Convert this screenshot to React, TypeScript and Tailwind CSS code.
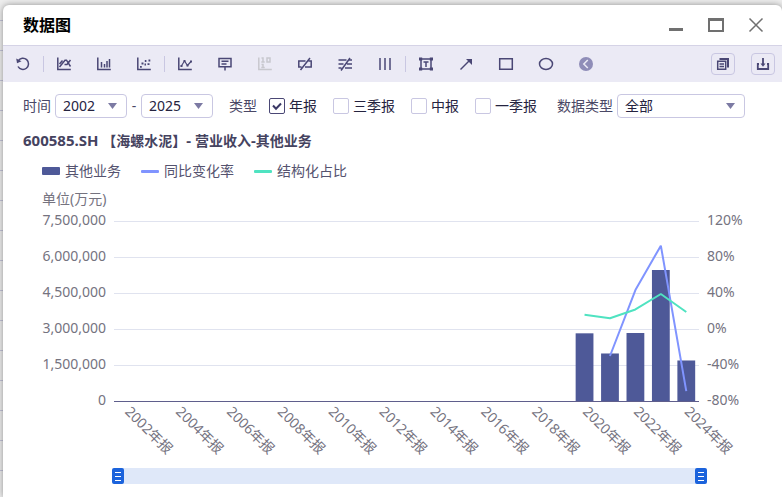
import React, { useState } from 'react';

const YEARS = Array.from({ length: 24 }, (_, i) => 2002 + i);
const REPORTS = ['年报', '三季报', '中报', '一季报'];

interface Point {
  year: number;
  income: number;
  yoy?: number;
  share: number;
}

const data: Point[] = [
  { year: 2020, income: 2820000, share: 15.9 },
  { year: 2021, income: 1980000, yoy: -30, share: 11.9 },
  { year: 2022, income: 2833000, yoy: 43.3, share: 21.7 },
  { year: 2023, income: 5458000, yoy: 92.6, share: 38.9 },
  { year: 2024, income: 1688000, yoy: -69, share: 18.9 },
];

// Plot area inside the chart svg
const LEFT = 111;
const RIGHT = 696;
const TOP = 33;
const BOTTOM = 213;
const BAND = (RIGHT - LEFT) / 23;

const xOf = (year: number) => LEFT + BAND * (year - 2002 + 0.5);
const yOfIncome = (v: number) => BOTTOM - (v / 7500000) * (BOTTOM - TOP);
const yOfPercent = (v: number) => BOTTOM - ((v + 80) / 200) * (BOTTOM - TOP);

function Icon({ children }: { children: React.ReactNode }) {
  return (
    <svg
      width="16"
      height="16"
      viewBox="0 0 16 16"
      fill="none"
      stroke="currentColor"
      strokeWidth="1.5"
      aria-hidden="true"
    >
      {children}
    </svg>
  );
}

const Axes = () => <path d="M1.8 1.5v12h13" />;

const tools = [
  {
    name: '重置',
    icon: (
      <Icon>
        <path d="M3.2 4.8A5.6 5.6 0 1 1 3 10.5" />
        <path d="M1.2 2.5l.8 4.7 4.5-2z" fill="currentColor" stroke="none" />
      </Icon>
    ),
    divider: true,
  },
  {
    name: '折线图',
    icon: (
      <Icon>
        <Axes />
        <path d="M3.5 11L9 4.2h1.5L14.5 10.5M3.5 8L6.5 4.500M8.500 8.500h2.500L14.5 4" />
      </Icon>
    ),
  },
  {
    name: '柱状图',
    icon: (
      <Icon>
        <Axes />
        <path d="M5.5 6v5.5M8.5 8v3.5M11 5v6.5M13.5 3v8.5" />
      </Icon>
    ),
  },
  {
    name: '散点图',
    icon: (
      <Icon>
        <Axes />
        <path d="M4 10.8h1.8M5.5 7.5h2M8.5 8.5h1.5M8.8 5h1.6M12.5 4.5h1.8M11.5 8.2h2" strokeWidth="1.8" />
      </Icon>
    ),
    divider: true,
  },
  {
    name: '极值',
    icon: (
      <Icon>
        <Axes />
        <path d="M4 10.5l3.5-5.5 3 4.5L14 5.5" strokeWidth="1.2" />
        <path d="M6.5 5h2M9.5 9.5h2M13 5.5h2M3.5 10h2" strokeWidth="2" />
      </Icon>
    ),
  },
  {
    name: '标注',
    icon: (
      <Icon>
        <path d="M2 2.5h12v8.3H2zM4.5 5.3h7M4.5 8h5M8 11v3.5" />
      </Icon>
    ),
  },
  {
    name: '小数位',
    icon: (
      <Icon>
        <Axes />
        <path d="M4.5 2H6v4.5M4.3 6h3.4M10 2h3v4h-3zM4.5 8.5H6v3.5M4.3 11.5h3.4" />
      </Icon>
    ),
    disabled: true,
  },
  {
    name: '隐藏边框',
    icon: (
      <Icon>
        <path d="M8.5 5H1.8v6h2.7M11.5 5h2.7v6H8M3.5 14L13 2" />
      </Icon>
    ),
  },
  {
    name: '隐藏网格线',
    icon: (
      <Icon>
        <path d="M1.5 4h8M12 4h3M1.5 8h5M10 8h5M1.5 12h3M8 12h7M4 14.5L13 2" />
      </Icon>
    ),
  },
  {
    name: '竖线',
    icon: (
      <Icon>
        <path d="M3 2v12M8 2v12M13 2v12" strokeWidth="2" opacity=".75" />
      </Icon>
    ),
    divider: true,
  },
  {
    name: '文本框',
    icon: (
      <Icon>
        <path d="M3 3h10v10H3zM5.5 6h5M8 6v5" />
        <path d="M1 1.5h3.2v3H1zM11.8 1.5H15v3h-3.2zM1 11.5h3.2v3H1zM11.8 11.5H15v3h-3.2z" fill="currentColor" stroke="none" />
      </Icon>
    ),
  },
  {
    name: '箭头',
    icon: (
      <Icon>
        <path d="M2.5 13.5L11 5" />
        <path d="M8 3h6v6z" fill="currentColor" stroke="none" />
      </Icon>
    ),
  },
  {
    name: '矩形',
    icon: (
      <Icon>
        <path d="M1.7 2.7h12.6v10.6H1.7z" />
      </Icon>
    ),
  },
  {
    name: '椭圆',
    icon: (
      <Icon>
        <ellipse cx="8" cy="8" rx="6.5" ry="5.5" />
      </Icon>
    ),
  },
  {
    name: '收起',
    icon: (
      <Icon>
        <circle cx="8" cy="8" r="7" fill="#8f8db8" stroke="none" />
        <path d="M9.8 4L5.8 8l4 4" stroke="#ebeaf5" />
      </Icon>
    ),
  },
];

interface SelectProps {
  label: string;
  value: string;
  options: string[];
  onChange: (value: string) => void;
  className: string;
}

function Select({ label, value, options, onChange, className }: SelectProps) {
  return (
    <div className={`relative ${className}`}>
      <select
        aria-label={label}
        value={value}
        onChange={(e) => onChange(e.target.value)}
        className="block h-6 w-full appearance-none rounded border border-[#c9c7e2] bg-white pl-[7px] pr-6 text-sm leading-[22px] text-[#25233f]"
      >
        {options.map((option) => (
          <option key={option}>{option}</option>
        ))}
      </select>
      <svg
        className="pointer-events-none absolute right-2.5 top-[9px]"
        width="9"
        height="6"
        viewBox="0 0 9 6"
        aria-hidden="true"
      >
        <path d="M0 0h9L4.5 6z" fill="#7c7aa3" />
      </svg>
    </div>
  );
}

function TitleBar() {
  return (
    <header className="flex h-10 items-center justify-between pl-5 pr-[18px]">
      <h1 className="text-base font-bold text-black">数据图</h1>
      <div className="flex items-center gap-6 text-[#707070]">
        <button aria-label="最小化">
          <svg width="16" height="16" viewBox="0 0 16 16">
            <path d="M1 12.5h14" stroke="currentColor" strokeWidth="3" />
          </svg>
        </button>
        <button aria-label="最大化">
          <svg width="16" height="16" viewBox="0 0 16 16" fill="none">
            <path d="M1 2h14v12H1z" stroke="currentColor" strokeWidth="2" />
            <path d="M0 2.5h16" stroke="currentColor" strokeWidth="3" />
          </svg>
        </button>
        <button aria-label="关闭">
          <svg width="16" height="16" viewBox="0 0 16 16">
            <path d="M1.5 1.5l13 13M14.5 1.5l-13 13" stroke="currentColor" strokeWidth="1.5" />
          </svg>
        </button>
      </div>
    </header>
  );
}

function Toolbar() {
  return (
    <div className="flex items-center justify-between border-t border-[#d5d3e6] bg-[#ebeaf5] pr-[7px] text-[#4a4775]">
      <div className="flex h-9 items-center">
        {tools.map((tool) => (
          <React.Fragment key={tool.name}>
            <button
              aria-label={tool.name}
              disabled={tool.disabled}
              className="flex h-9 w-10 items-center justify-center disabled:text-[#c8c8ce]"
            >
              {tool.icon}
            </button>
            {tool.divider && <span className="h-4 w-px bg-[#c9c7e2]" />}
          </React.Fragment>
        ))}
      </div>
      <div className="flex gap-4">
        <button
          aria-label="复制"
          className="flex h-[22px] w-6 items-center justify-center rounded border border-[#c9c7e2]"
        >
          <svg width="14" height="14" viewBox="0 0 14 14" fill="none" stroke="currentColor" strokeWidth="1.5">
            <path d="M1.7 4.2h8v8h-8zM3.5 7h4.5M3.5 9.5h4.5" />
            <path d="M3.5 2h8.5v8.5" strokeWidth="2" />
          </svg>
        </button>
        <button
          aria-label="下载"
          className="flex h-[22px] w-6 items-center justify-center rounded border border-[#c9c7e2]"
        >
          <svg width="14" height="14" viewBox="0 0 14 14" fill="none" stroke="currentColor" strokeWidth="1.8">
            <path d="M3 7H1.8v5h10.4V7H11M7 1v7" />
            <path d="M4.5 6.5h5L7 9.8z" fill="currentColor" stroke="none" />
          </svg>
        </button>
      </div>
    </div>
  );
}

function Filters() {
  const [start, setStart] = useState('2002');
  const [end, setEnd] = useState('2025');
  const [scope, setScope] = useState('全部');
  const [checked, setChecked] = useState<string[]>(['年报']);

  const toggle = (name: string) => {
    setChecked((prev) => (prev.includes(name) ? prev.filter((n) => n !== name) : [...prev, name]));
  };

  const years = YEARS.map(String);

  return (
    <div className="flex flex-wrap items-center px-5 pt-3 text-sm leading-6 text-[#4a4866]">
      <span className="mr-1">时间</span>
      <Select label="开始年份" value={start} options={years} onChange={setStart} className="w-[72px]" />
      <span className="w-[14px] text-center">-</span>
      <Select label="结束年份" value={end} options={years} onChange={setEnd} className="w-[72px]" />
      <span className="ml-4 mr-3">类型</span>
      <div className="mr-5 flex gap-4">
        {REPORTS.map((name) => (
          <label key={name} className="flex items-center gap-1 text-[#25233f]">
            <span className="grid size-4">
              <input
                type="checkbox"
                checked={checked.includes(name)}
                onChange={() => toggle(name)}
                className="peer col-start-1 row-start-1 size-4 appearance-none rounded-xs border border-[#c9c7e2] bg-white checked:border-[#4a4775]"
              />
              <svg
                className="pointer-events-none invisible col-start-1 row-start-1 text-[#3b3966] peer-checked:visible"
                width="16"
                height="16"
                viewBox="0 0 16 16"
                fill="none"
              >
                <path d="M4 7.5l3 3.2 5-5.2" stroke="currentColor" strokeWidth="2" />
              </svg>
            </span>
            {name}
          </label>
        ))}
      </div>
      <span className="mr-1">数据类型</span>
      <Select
        label="数据类型"
        value={scope}
        options={['全部', '同比变化率', '结构化占比']}
        onChange={setScope}
        className="w-32"
      />
    </div>
  );
}

function Legend() {
  return (
    <ul className="flex gap-5 pl-[39px] text-sm leading-5 text-[#55536f]">
      <li className="flex items-center gap-[5px]">
        <span className="h-2 w-[18px] rounded-[1px] bg-[#4e5998]" />
        其他业务
      </li>
      <li className="flex items-center gap-[5px]">
        <span className="h-[3px] w-[18px] rounded-[1px] bg-[#8094ff]" />
        同比变化率
      </li>
      <li className="flex items-center gap-[5px]">
        <span className="h-[3px] w-[18px] rounded-[1px] bg-[#4fe3c1]" />
        结构化占比
      </li>
    </ul>
  );
}

function Chart() {
  const yoyPoints = data
    .filter((d) => d.yoy !== undefined)
    .map((d) => `${xOf(d.year)},${yOfPercent(d.yoy as number)}`)
    .join(' ');
  const sharePoints = data.map((d) => `${xOf(d.year)},${yOfPercent(d.share)}`).join(' ');

  return (
    <svg viewBox="0 0 779 280" className="block h-auto w-full" fontSize="14" fill="#75737f" role="img" aria-label="其他业务">
      <text x="39" y="16">单位(万元)</text>
      {[0, 1, 2, 3, 4, 5].map((i) => {
        const y = BOTTOM - i * 36;
        return (
          <g key={i}>
            {i > 0 && <path d={`M${LEFT} ${y + 0.5}H${RIGHT}`} stroke="#e0e3ef" />}
            <text x="103" y={y + 4} textAnchor="end">{(i * 1500000).toLocaleString('en-US')}</text>
            <text x="704" y={y + 4}>{i * 40 - 80}%</text>
          </g>
        );
      })}
      {data.map((d) => (
        <rect
          key={d.year}
          x={xOf(d.year) - 8.9}
          y={yOfIncome(d.income)}
          width="17.8"
          height={BOTTOM - yOfIncome(d.income)}
          fill="#4e5998"
        />
      ))}
      <path d={`M${LEFT} ${BOTTOM + 0.5}H${RIGHT}`} stroke="#5f5e8c" />
      <polyline points={yoyPoints} fill="none" stroke="#8094ff" strokeWidth="2" strokeLinejoin="bevel" />
      <polyline points={sharePoints} fill="none" stroke="#4fe3c1" strokeWidth="2" strokeLinejoin="bevel" />
      {YEARS.filter((year) => year % 2 === 0).map((year) => (
        <text key={year} transform={`translate(${xOf(year) + 1} ${BOTTOM + 8}) rotate(45)`} y="5">
          {year}年报
        </text>
      ))}
    </svg>
  );
}

const thumb =
  'pointer-events-none col-start-1 row-start-1 h-4 w-full appearance-none bg-transparent [&::-webkit-slider-thumb]:pointer-events-auto [&::-webkit-slider-thumb]:h-4 [&::-webkit-slider-thumb]:w-3 [&::-webkit-slider-thumb]:appearance-none [&::-webkit-slider-thumb]:rounded-xs [&::-webkit-slider-thumb]:border-x-3 [&::-webkit-slider-thumb]:border-t-4 [&::-webkit-slider-thumb]:border-b-3 [&::-webkit-slider-thumb]:border-[#1b63dc] [&::-webkit-slider-thumb]:bg-[repeating-linear-gradient(#fff_0px,#fff_1px,#1b63dc_1px,#1b63dc_4px)] [&::-webkit-slider-thumb]:bg-origin-padding';

function RangeSlider() {
  const [from, setFrom] = useState(0);
  const [to, setTo] = useState(100);

  return (
    <div className="ml-[14%] mr-[9.6%] grid items-center">
      <div className="col-start-1 row-start-1 mx-1.5 h-4 bg-[#dfe8f9]" />
      <input
        type="range"
        aria-label="起始位置"
        value={from}
        onChange={(e) => setFrom(Math.min(Number(e.target.value), to))}
        className={thumb}
      />
      <input
        type="range"
        aria-label="结束位置"
        value={to}
        onChange={(e) => setTo(Math.max(Number(e.target.value), from))}
        className={thumb}
      />
    </div>
  );
}

export default function App() {
  return (
    <div className="min-h-screen bg-[#ededed] bg-[repeating-linear-gradient(transparent_0px,transparent_20px,#c4c4d8_20px,#c4c4d8_21px,transparent_21px,transparent_30px)] pl-[3px] pt-[5px] font-['Noto_Sans','Noto_Sans_CJK_SC',sans-serif]">
      <main className="min-h-[calc(100vh-5px)] rounded-t-md bg-white shadow-[0_0_6px_rgba(0,0,0,0.4)]">
        <TitleBar />
        <Toolbar />
        <Filters />
        <h2 className="px-5 pt-3 text-sm leading-5 font-bold text-[#45435f]">
          <span className="text-[15px]">600585.SH </span>
          【海螺水泥】<span className="text-[15px]">- </span>营业收入<span className="text-[15px]">-</span>其他业务
        </h2>
        <div className="pt-2.5">
          <Legend />
          <div className="pt-[7px]">
            <Chart />
          </div>
          <RangeSlider />
        </div>
      </main>
    </div>
  );
}
